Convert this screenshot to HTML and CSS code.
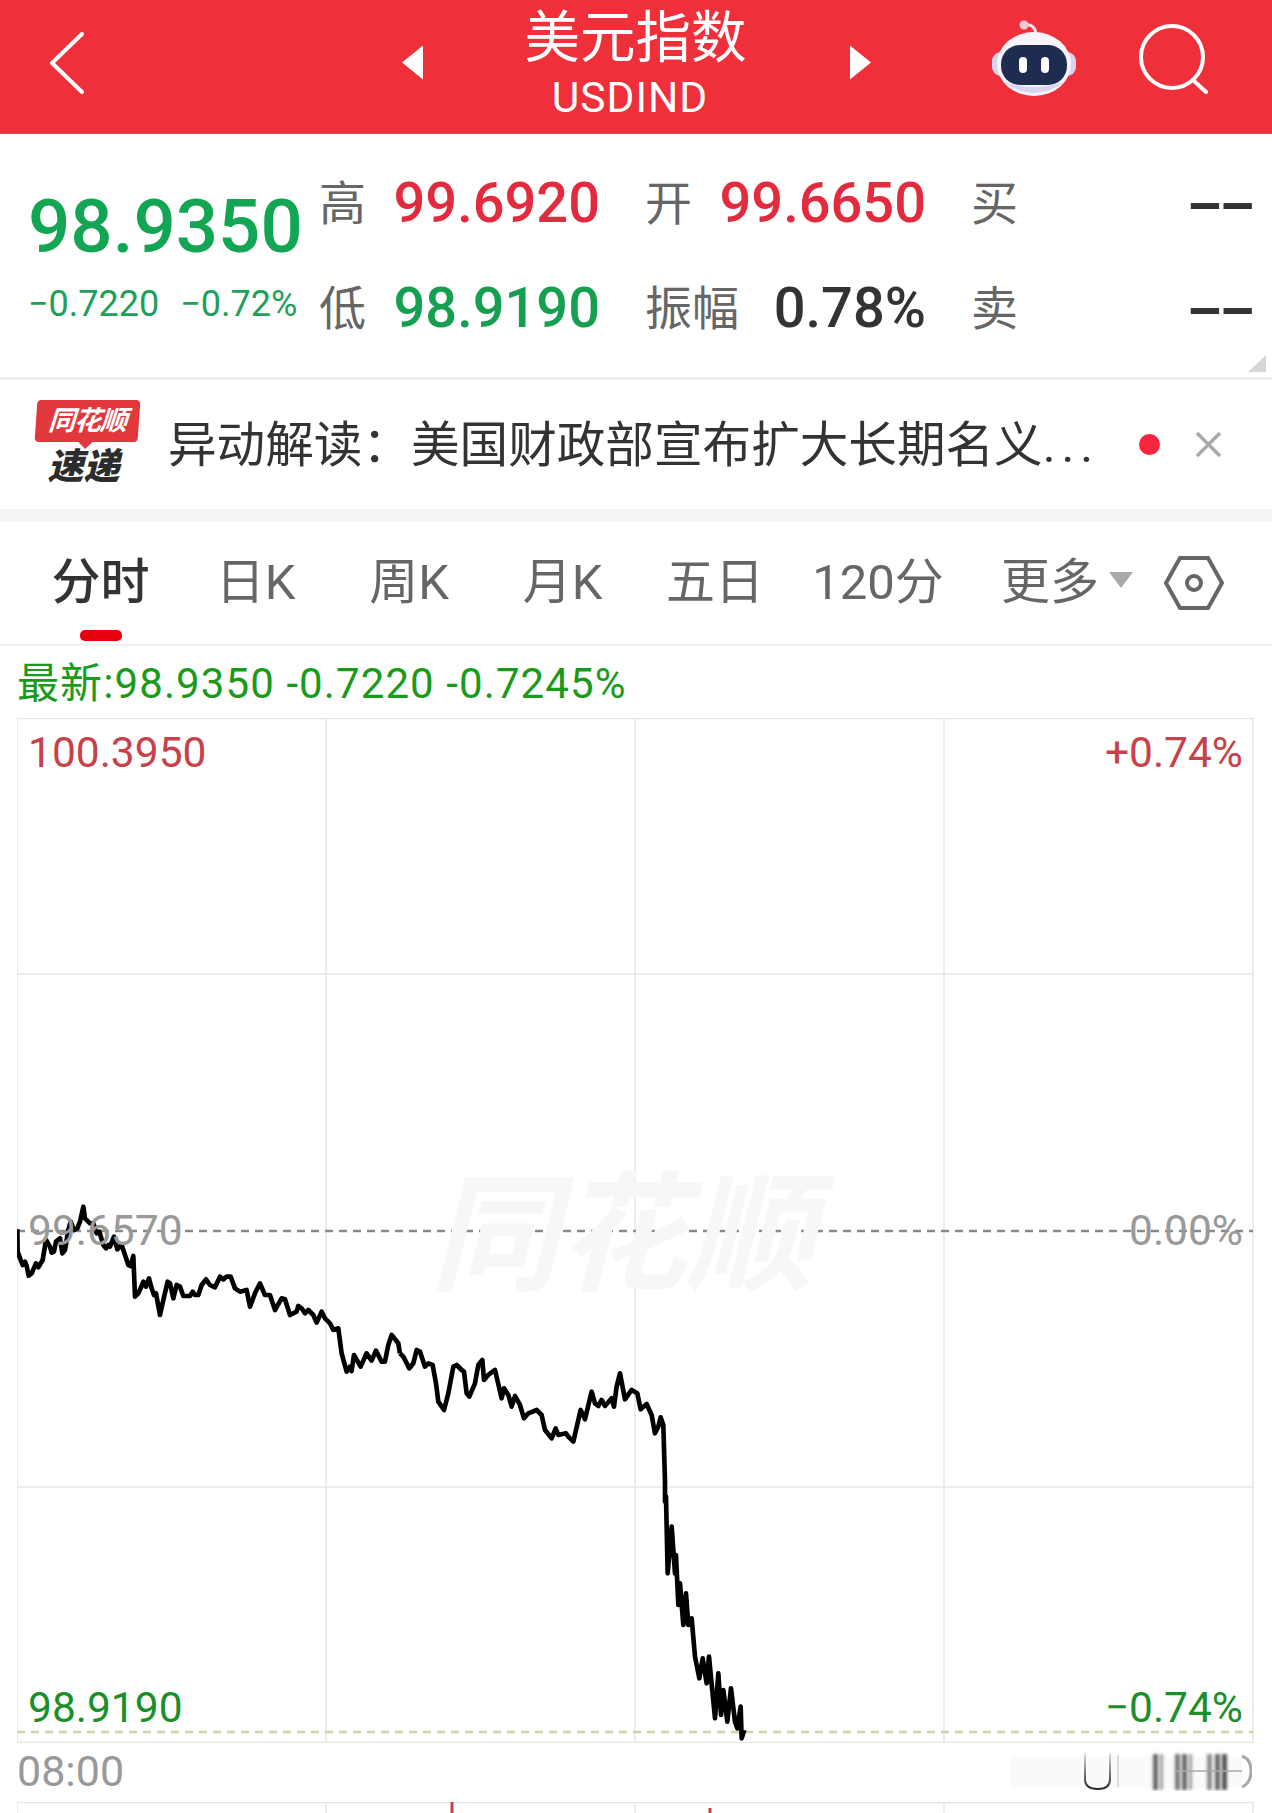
FILE: index.html
```html
<!DOCTYPE html>
<html lang="zh-CN">
<head>
    <meta charset="utf-8">
    <title>美元指数</title>
    <link rel="stylesheet" href="styles.css">
</head>
<body>
<div class="page">
    <header class="topbar">
        <svg class="back" viewBox="0 0 35 62"><path d="M33 2 L3 31 L33 60" fill="none" stroke="#fff" stroke-width="4" stroke-linecap="round" stroke-linejoin="round"/></svg>
        <span class="tri tri-left"></span>
        <div class="title">
            <h1>美元指数</h1>
            <p>USDIND</p>
        </div>
        <span class="tri tri-right"></span>
        <svg class="robot" viewBox="0 0 84 76">
            <path d="M32 5 Q42 3 44 13" fill="none" stroke="#f3dfe8" stroke-width="3"/>
            <circle cx="32" cy="5" r="4.5" fill="#f5c9d4"/>
            <rect x="0" y="32" width="84" height="24" rx="9" fill="#d9d4f0"/>
            <ellipse cx="42" cy="44" rx="37" ry="32" fill="#f6f3fb"/>
            <path d="M12 62 Q42 84 72 62 Q42 72 12 62 Z" fill="#d9d4f0"/>
            <rect x="9" y="25" width="66" height="40" rx="19" fill="#1f2c52"/>
            <rect x="27" y="37" width="8" height="16" rx="4" fill="#fff"/>
            <rect x="49" y="37" width="8" height="16" rx="4" fill="#fff"/>
        </svg>
        <svg class="search" viewBox="0 0 70 70"><circle cx="33" cy="33" r="31" fill="none" stroke="#fff" stroke-width="4"/><path d="M55 57 L67 68" fill="none" stroke="#fff" stroke-width="4" stroke-linecap="round"/></svg>
    </header>

    <section class="quote">
        <div class="price">
            <div class="price-now">98.9350</div>
            <div class="price-change"><span>−0.7220</span><span>−0.72%</span></div>
        </div>
        <div class="stats">
            <div class="stat"><span class="label">高</span><span class="val red">99.6920</span></div>
            <div class="stat"><span class="label">开</span><span class="val red">99.6650</span></div>
            <div class="stat"><span class="label">买</span><span class="val dash">--</span></div>
            <div class="stat"><span class="label">低</span><span class="val green">98.9190</span></div>
            <div class="stat"><span class="label">振幅</span><span class="val">0.78%</span></div>
            <div class="stat"><span class="label">卖</span><span class="val dash">--</span></div>
        </div>
        <span class="corner"></span>
    </section>

    <section class="news">
        <div class="logo">
            <div class="logo-top">同花顺</div>
            <div class="logo-bottom">速递</div>
        </div>
        <p class="news-text">异动解读：美国财政部宣布扩大长期名义<span class="dots">...</span></p>
        <span class="news-dot"></span>
        <svg class="news-close" viewBox="0 0 27 25"><path d="M2 1 L25 24 M25 1 L2 24" stroke="#aaa" stroke-width="3.5" fill="none"/></svg>
    </section>

    <nav class="tabs">
        <a class="tab active">分时</a>
        <a class="tab">日K</a>
        <a class="tab">周K</a>
        <a class="tab">月K</a>
        <a class="tab">五日</a>
        <a class="tab">120分</a>
        <a class="tab">更多<span class="more-tri"></span></a>
        <svg class="hex" viewBox="0 0 60 54"><path d="M2 27 L16 2 H44 L58 27 L44 52 H16 Z" fill="none" stroke="#666" stroke-width="4"/><circle cx="30" cy="27" r="7" fill="none" stroke="#666" stroke-width="4"/></svg>
    </nav>

    <div class="latest">最新:98.9350 -0.7220 -0.7245%</div>

    <div class="chart">
        <svg class="chart-svg" viewBox="17 718 1237 1025">
            <g stroke="#e6e6e6" stroke-width="1.5" fill="none">
                <rect x="17" y="718.5" width="1236" height="1024"/>
                <path d="M326 718V1742 M635 718V1742 M944 718V1742"/>
                <path d="M17 974H1253 M17 1487H1253"/>
            </g>
            <path d="M17 1231H1253" stroke="#8a8a8a" stroke-width="2.5" stroke-dasharray="8 6"/>
            <path d="M17 1732H1253" stroke="#d4d0ac" stroke-width="2.5" stroke-dasharray="8 6"/>
            <text class="mark" x="430" y="1280">同花顺</text>
            <g fill="none" stroke="#000" stroke-width="14" stroke-linejoin="round">
                <polyline transform="translate(0 1180) scale(.3333)" points="52,148 53,215 62,240 68,255 75,245 80,258 86,287 95,280 100,268 108,250 115,262 128,240 138,180 150,200 155,218 162,215 168,185 180,175 187,220 195,210 205,150 212,125 222,150 232,145 240,125 250,80 255,115 270,130 280,130 290,160 298,155 310,195 318,205 325,195 330,200 342,170 352,208 365,195 375,225 385,255 392,258 400,228 405,350 415,340 422,325 430,305 438,320 447,295 455,325 462,345 468,340 480,405 490,360 503,305 510,310 520,355 530,315 540,320 550,348 570,348 578,335 585,345 595,345 605,315 618,298 630,315 645,322 660,290 670,298 680,290 692,290 705,325 720,335 740,330 750,380 765,340 780,310 795,345 810,345 825,390 845,355 855,358 870,405 890,395 895,378 905,385 915,400 925,390 940,405 950,428 965,395 975,415 990,430 1000,450 1015,445 1025,520 1040,575 1050,560 1055,573 1062,525 1082,560 1100,520 1115,542 1128,512 1145,545 1155,545 1165,495 1175,465 1195,490 1200,520"/>
                <polyline transform="translate(320 1180) scale(.3333)" points="240,520 250,530 268,565 280,550 290,510 300,515 315,560 325,550 338,555 348,610 355,665 372,690 385,640 400,560 410,555 425,570 432,575 440,640 448,650 465,610 475,555 487,540 492,600 505,585 525,570 545,655 552,625 565,645 575,680 585,648 600,675 612,715 625,700 650,690 665,705 675,750 695,775 707,745 715,765 738,760 745,770 760,785 775,720 782,690 795,718 815,635 825,670 835,678 845,660 855,678 875,655 882,680 890,620 900,580 915,658 935,630 952,640 962,688 980,672 995,705 1005,760 1015,740 1022,712 1030,735 1035,900"/>
                <polyline transform="translate(620 1400) scale(.3333)" points="135,240 135,305 138,290 143,520 155,380 165,520 168,465 175,615 180,550 190,675 198,580 205,675 215,655 225,770 238,835 248,775 260,850 267,770 285,955 295,820 303,945 310,870 322,965 333,865 345,965 352,985 362,920 365,1015 373,990"/>
            </g>
        </svg>
        <span class="axis top left red-soft">100.3950</span>
        <span class="axis top right red-soft">+0.74%</span>
        <span class="axis mid left gray">99.6570</span>
        <span class="axis mid right gray">0.00%</span>
        <span class="axis low left green-soft">98.9190</span>
        <span class="axis low right green-soft">−0.74%</span>
    </div>

    <div class="timeline">
        <span class="time">08:00</span>
        <svg class="ghost" viewBox="0 0 242 40">
            <defs>
                <linearGradient id="fade" x1="0" y1="0" x2="0" y2="1">
                    <stop offset="0" stop-color="#000" stop-opacity=".1"/>
                    <stop offset="1" stop-color="#000" stop-opacity=".85"/>
                </linearGradient>
                <filter id="soft"><feGaussianBlur stdDeviation="1.4"/></filter>
            </defs>
            <rect x="0" y="5" width="232" height="32" fill="#fafafa"/>
            <path d="M75 2V28Q75 38 88 38Q100 38 100 28V2" fill="none" stroke="url(#fade)" stroke-width="2"/>
            <rect x="107" y="4" width="2" height="32" fill="#ddd"/>
            <g filter="url(#soft)" fill="#444">
                <rect x="143" y="3" width="5" height="36" opacity=".8"/>
                <rect x="150" y="3" width="3" height="36" opacity=".5"/>
                <rect x="165" y="3" width="5" height="36" opacity=".7"/>
                <rect x="172" y="3" width="5" height="36" opacity=".8"/>
                <rect x="179" y="3" width="3" height="36" opacity=".5"/>
                <rect x="197" y="3" width="5" height="36" opacity=".6"/>
                <rect x="205" y="3" width="5" height="36" opacity=".8"/>
                <rect x="212" y="3" width="5" height="36" opacity=".9"/>
            </g>
            <path d="M165 20H232" stroke="#aaa" stroke-width="1.5"/>
            <path d="M232 5Q241 8 241 20Q241 32 232 36" fill="none" stroke="#aaa" stroke-width="3"/>
        </svg>
    </div>

    <div class="subchart">
        <svg class="subchart-svg" viewBox="17 1802 1237 11">
            <g stroke="#e6e6e6" stroke-width="1.5" fill="none">
                <path d="M17 1802.5H1253 M17 1802V1813 M326 1802V1813 M635 1802V1813 M944 1802V1813 M1253 1802V1813"/>
            </g>
            <path d="M452 1802V1813 M710 1808V1813" stroke="#c8414a" stroke-width="3"/>
        </svg>
    </div>
</div>
</body>
</html>
```

FILE: styles.css
```css
*{
    box-sizing: border-box;
}
body{
    margin: 0;
    background: #fff;
    font-family: Roboto, "Noto Sans CJK SC", sans-serif;
}
.page{
    width: 1272px;
    height: 1813px;
    overflow: hidden;
}

/* Top bar */
.topbar{
    display: flex;
    align-items: center;
    height: 134px;
    padding-left: 49px;
    padding-bottom: 8px;
    background: #ef2f3a;
    border-bottom: 1px solid #c9545c;
    color: #fff;
}
.back{
    width: 35px;
    height: 62px;
    margin-right: 318px;
}
.tri{
    width: 21px;
    height: 34px;
}
.tri-left{
    background: #fff;
    clip-path: polygon(100% 0, 0 50%, 100% 100%);
}
.tri-right{
    background: #fff;
    clip-path: polygon(0 0, 100% 50%, 0 100%);
}
.title{
    width: 427px;
    padding-top: 5px;
    text-align: center;
}
.title h1{
    margin: 0;
    padding-right: 2px;
    font-size: 55.5px;
    font-weight: 400;
    line-height: 62px;
}
.title p{
    margin: 4px 0 0;
    padding-right: 13px;
    font-size: 42.5px;
    line-height: 48px;
    letter-spacing: 1px;
}
.robot{
    width: 84px;
    height: 76px;
    margin-left: 121px;
    margin-bottom: 9px;
}
.search{
    width: 70px;
    height: 70px;
    margin-left: 63px;
    margin-bottom: 8px;
}

/* Quote */
.quote{
    position: relative;
    display: flex;
    height: 246px;
    padding: 39px 19px 0 28px;
    border-bottom: 3px solid #eeeeee;
}
.price{
    width: 292px;
    padding-top: 9px;
}
.price-now{
    font-size: 74.5px;
    font-weight: 500;
    line-height: 90px;
    color: #12a553;
}
.price-change{
    display: flex;
    gap: 21px;
    margin-top: 12px;
    font-size: 36px;
    line-height: 40px;
    color: #1ea05a;
}
.stats{
    display: grid;
    grid-template-columns: repeat(3, 281px);
    column-gap: 45px;
    row-gap: 45px;
    width: 933px;
    margin-left: -1px;
    align-content: start;
}
.stat{
    display: flex;
    justify-content: space-between;
    align-items: center;
    height: 60px;
}
.label{
    margin-bottom: 7px;
    font-size: 47px;
    color: #666;
}
.val{
    font-size: 56px;
    font-weight: 500;
    color: #333;
}
.red{
    color: #e22b3e;
}
.green{
    color: #14a050;
}
.dash{
    font-size: 54px;
    font-weight: 700;
    letter-spacing: -4px;
    margin-right: 1px;
    transform: scaleX(1.9);
    transform-origin: right center;
}
.corner{
    position: absolute;
    right: 6px;
    bottom: 5px;
    width: 18px;
    height: 17px;
    background: #d6d6d6;
    clip-path: polygon(100% 0, 100% 100%, 0 100%);
}

/* News strip */
.news{
    display: flex;
    align-items: center;
    height: 129px;
    padding-left: 36px;
}
.logo{
    width: 103px;
    text-align: center;
}
.logo-top{
    position: relative;
    height: 42px;
    border-radius: 4px;
    background: #e2373c;
    color: #fff;
    font-size: 27px;
    font-weight: 700;
    font-style: italic;
    line-height: 42px;
    letter-spacing: -1px;
    transform: skewX(-4deg);
}
.logo-top::after{
    content: "";
    position: absolute;
    left: 44px;
    bottom: -7px;
    border-left: 7px solid transparent;
    border-right: 7px solid transparent;
    border-top: 7px solid #e2373c;
}
.logo-bottom{
    margin-top: 3px;
    padding-right: 8px;
    color: #2c2c2c;
    font-size: 36px;
    font-weight: 900;
    font-style: italic;
    line-height: 44px;
}
.news-text{
    width: 969px;
    margin: 2px 0 0 29px;
    font-size: 48.6px;
    line-height: 60px;
    color: #333;
    white-space: nowrap;
}
.dots{
    letter-spacing: 6px;
}
.news-dot{
    width: 21px;
    height: 21px;
    margin-left: 2px;
    border-radius: 50%;
    background: #f5263d;
}
.news-close{
    width: 27px;
    height: 25px;
    margin-left: 35px;
}

/* Tabs */
.tabs{
    display: grid;
    grid-template-columns: 157px 153px 154px 153px 152px 174px 204px 60px;
    align-items: center;
    height: 137px;
    padding-left: 22px;
    border-top: 13px solid #f5f5f5;
    border-bottom: 2px solid #f1f1f1;
}
.tab{
    position: relative;
    display: flex;
    justify-content: center;
    align-items: center;
    margin-top: -12px;
    font-size: 49px;
    color: #666;
}
.tab.active{
    color: #333;
    font-weight: 500;
}
.tab.active::after{
    content: "";
    position: absolute;
    left: 58px;
    bottom: -28px;
    width: 42px;
    height: 11px;
    border-radius: 5px;
    background: #e8000e;
}
.more-tri{
    width: 24px;
    height: 16px;
    margin-left: 10px;
    margin-top: 6px;
    background: #aaa;
    clip-path: polygon(0 0, 100% 0, 50% 100%);
}
.hex{
    width: 60px;
    height: 54px;
    margin-left: -5px;
}

/* Latest line */
.latest{
    height: 72px;
    padding-left: 17px;
    font-size: 42px;
    line-height: 76px;
    letter-spacing: 1.1px;
    color: #1a9a1a;
}

/* Chart */
.chart{
    position: relative;
    width: 1237px;
    height: 1025px;
    margin-left: 17px;
}
.chart-svg{
    display: block;
    width: 1237px;
    height: 1025px;
}
.mark{
    font-family: "Noto Sans CJK SC", sans-serif;
    font-size: 128px;
    font-weight: 700;
    font-style: italic;
    fill: #f7f7f7;
}
.axis{
    position: absolute;
    font-size: 42.5px;
    line-height: 50px;
}
.axis.left{
    left: 11px;
}
.axis.right{
    right: 11px;
}
.axis.top{
    top: 10px;
}
.axis.mid{
    top: 488px;
}
.axis.low{
    top: 965px;
}
.red-soft{
    color: #c8414a;
}
.gray{
    color: #999;
}
.green-soft{
    color: #1a8f2a;
}

/* Bottom */
.timeline{
    display: flex;
    justify-content: space-between;
    align-items: center;
    height: 59px;
    padding: 0 20px 4px 17px;
}
.time{
    font-size: 43px;
    color: #999;
}
.ghost{
    width: 242px;
    height: 40px;
}
.subchart{
    width: 1237px;
    margin-left: 17px;
}
.subchart-svg{
    display: block;
    width: 1237px;
    height: 11px;
}
```
